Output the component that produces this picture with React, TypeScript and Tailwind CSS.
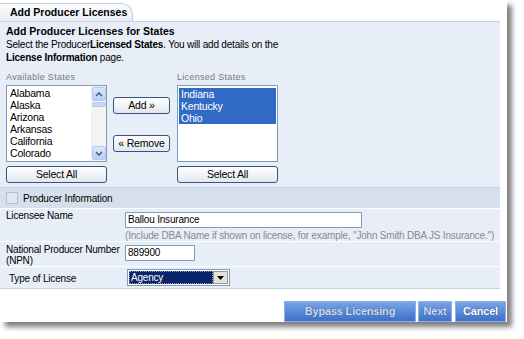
import React from "react";

const available = ["Alabama", "Alaska", "Arizona", "Arkansas", "California", "Colorado"];
const licensed = ["Indiana", "Kentucky", "Ohio"];

const SoftButton = ({ children, className = "" }: { children: React.ReactNode; className?: string }) => (
    <button
        className={`block h-[17px] border border-[#34557f] rounded-[3px] bg-linear-to-b from-white to-[#e3e8ee] text-[10.5px] leading-none text-black ${className}`}
    >
        {children}
    </button>
);

const BlueButton = ({ children, className = "", dim }: { children: React.ReactNode; className?: string; dim?: boolean }) => (
    <button
        className={`block h-[21px] border border-[#8fb0e4] bg-linear-to-b from-[#79a3e6] via-[#5a8bd9] to-[#3d6fc6] text-[11px] font-bold leading-none ${
            dim ? "text-[#d3dcea] [text-shadow:0_0_1px_#1f3f7a]" : "text-white [text-shadow:0_0_1px_#1a3566]"
        } ${className}`}
    >
        {children}
    </button>
);

const Scrollbar = () => (
    <div className="w-[15px] h-full flex flex-col bg-[#f3f3ef] border-l border-[#eef0f3] py-[1px]">
        <div className="h-[14px] rounded-[2px] bg-linear-to-b from-[#dbe7fc] to-[#b9cef4] border border-[#b5c9ef] flex items-center justify-center">
            <svg width="8" height="5" viewBox="0 0 8 5">
                <path d="M1 4 L4 1 L7 4" stroke="#4d6185" strokeWidth="1.6" fill="none" />
            </svg>
        </div>
        <div className="h-[5px] mt-[1px] rounded-[2px] bg-[#c5d6f6] border border-[#b5c9ef]" />
        <div className="flex-1" />
        <div className="h-[14px] rounded-[2px] bg-linear-to-b from-[#dbe7fc] to-[#b9cef4] border border-[#b5c9ef] flex items-center justify-center">
            <svg width="8" height="5" viewBox="0 0 8 5">
                <path d="M1 1 L4 4 L7 1" stroke="#4d6185" strokeWidth="1.6" fill="none" />
            </svg>
        </div>
    </div>
);

export default function App() {
    return (
        <div className="w-[524px] h-[339px] bg-white font-['Liberation_Sans',Arial,sans-serif] text-black text-[10px] tracking-[-0.2px]">
            <div className="w-[507px] h-[322px] bg-white shadow-[5px_5px_5px_rgba(0,0,0,0.5)] flex flex-col">
                {/* tab */}
                <div className="h-[21px] pt-[3px] flex">
                    <div className="w-[133px] h-[18px] rounded-tr-[12px] border-t border-r border-[#c3cfdd] bg-linear-to-b from-[#fbfcfd] to-[#e9eef5] pl-[10px] text-[10.5px] font-bold leading-[17px] tracking-normal whitespace-nowrap">
                        Add Producer Licenses
                    </div>
                </div>

                {/* panel */}
                <div className="w-[500px] bg-[#e8eef7] border-t border-[#c4d2e2] border-b border-b-[#c4d2e2]">
                    <div className="px-[6px] pt-[3px] leading-[13px]">
                        <div className="font-bold text-[10.5px] tracking-normal">Add Producer Licenses for States</div>
                        <div>
                            Select the Producer<b>Licensed States</b>. You will add details on the
                        </div>
                        <div>
                            <b>License Information</b> page.
                        </div>
                    </div>

                    <div className="flex pl-[6px] mt-[7px]">
                        <div className="w-[101px]">
                            <div className="text-[9px] leading-[12px] tracking-[0.3px] text-[#7b7b7b] h-[14px]">Available States</div>
                            <div className="h-[77px] border border-[#7f9db9] bg-white flex">
                                <div className="flex-1 pt-[1px] pl-[3px] text-[10.5px] leading-[12px]">
                                    {available.map((s) => (
                                        <div key={s}>{s}</div>
                                    ))}
                                </div>
                                <Scrollbar />
                            </div>
                            <SoftButton className="w-[101px] mt-[4px]">Select All</SoftButton>
                        </div>

                        <div className="w-[57px] ml-[6px] pt-[26px] flex flex-col gap-[21px]">
                            <SoftButton className="w-[57px]">Add »</SoftButton>
                            <SoftButton className="w-[57px]">« Remove</SoftButton>
                        </div>

                        <div className="w-[101px] ml-[7px]">
                            <div className="text-[9px] leading-[12px] tracking-[0.3px] text-[#7b7b7b] h-[14px]">Licensed States</div>
                            <div className="h-[77px] border border-[#7f9db9] bg-white p-[1px] pt-[2px] text-[10.5px] leading-[12px]">
                                {licensed.map((s) => (
                                    <div key={s} className="bg-[#316ac5] text-white pl-[2px]">
                                        {s}
                                    </div>
                                ))}
                            </div>
                            <SoftButton className="w-[101px] mt-[4px]">Select All</SoftButton>
                        </div>
                    </div>

                    {/* producer information */}
                    <div className="mt-[4px] border-t border-dotted border-[#b7c5d7] bg-[#d6e0ed] h-[21px] flex items-center pl-[6px]">
                        <span className="w-[12px] h-[12px] border border-[#b4bfcd] bg-[#e3e8ef] mr-[5px]" />
                        Producer Information
                    </div>

                    <div className="grid grid-cols-[125px_1fr] border-t border-white h-[33px]">
                        <div className="pl-[6px] leading-[13px]">Licensee Name</div>
                        <div className="pt-[3px]">
                            <div className="w-[237px] h-[16px] border border-[#7f9db9] bg-white pl-[2px] leading-[14px]">
                                Ballou Insurance
                            </div>
                            <div className="mt-[1px] text-[#8a8a8a] leading-[13px] whitespace-nowrap">
                                (Include DBA Name if shown on license, for example, "John Smith DBA JS Insurance.")
                            </div>
                        </div>
                    </div>

                    <div className="grid grid-cols-[125px_1fr] border-t border-white h-[25px]">
                        <div className="pl-[6px] pt-[2px] leading-[11px] whitespace-nowrap">
                            National Producer Number
                            <br />
                            (NPN)
                        </div>
                        <div className="pt-[3px]">
                            <div className="w-[70px] h-[16px] border border-[#7f9db9] bg-white pl-[2px] leading-[14px]">889900</div>
                        </div>
                    </div>

                    <div className="grid grid-cols-[125px_1fr] border-t border-white h-[22px]">
                        <div className="pl-[9px] pt-[5px] leading-[13px]">Type of License</div>
                        <div className="pt-[2px] pl-[2px]">
                            <div className="w-[103px] h-[17px] border border-[#7f9db9] bg-white flex p-[1px]">
                                <div className="flex-1 bg-[#0a246a] text-white pl-[2px] leading-[13px] outline-1 outline-dotted outline-[#8a96b4] -outline-offset-1">
                                    Agency
                                </div>
                                <div className="w-[15px] bg-[#e4e2dc] border border-[#9a9a94] flex items-center justify-center">
                                    <svg width="7" height="4" viewBox="0 0 7 4">
                                        <path d="M0 0 H7 L3.5 4 Z" fill="#000" />
                                    </svg>
                                </div>
                            </div>
                        </div>
                    </div>
                </div>

                {/* actions */}
                <div className="flex justify-end gap-[2px] pr-[1px] mt-[12px]">
                    <BlueButton dim className="w-[132px]">
                        Bypass Licensing
                    </BlueButton>
                    <BlueButton dim className="w-[34px]">
                        Next
                    </BlueButton>
                    <BlueButton className="w-[51px] ml-[1px]">Cancel</BlueButton>
                </div>
            </div>
        </div>
    );
}
